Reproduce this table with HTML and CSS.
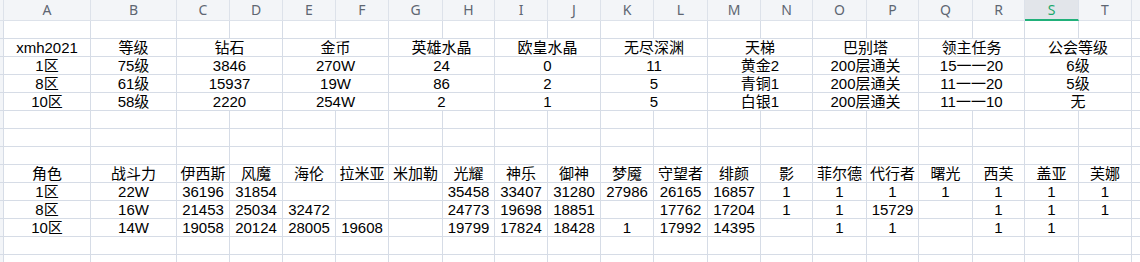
FILE: index.html
```html
<!DOCTYPE html>
<html lang="zh-CN">
<head>
<meta charset="utf-8">
<title>Sheet</title>
<link rel="stylesheet" href="styles.css">
</head>
<body>
<div class="sheet">
  <div class="row hd">
    <div class="c rh"></div><div class="c">A</div><div class="c">B</div><div class="c">C</div><div class="c">D</div><div class="c">E</div><div class="c">F</div><div class="c">G</div><div class="c">H</div><div class="c">I</div><div class="c">J</div><div class="c">K</div><div class="c">L</div><div class="c">M</div><div class="c">N</div><div class="c">O</div><div class="c">P</div><div class="c">Q</div><div class="c">R</div><div class="c sel">S</div><div class="c">T</div><div class="c u"></div>
  </div>
  <div class="row">
    <div class="c rh"></div><div class="c"></div><div class="c"></div><div class="c"></div><div class="c"></div><div class="c"></div><div class="c"></div><div class="c"></div><div class="c"></div><div class="c"></div><div class="c"></div><div class="c"></div><div class="c"></div><div class="c"></div><div class="c"></div><div class="c"></div><div class="c"></div><div class="c"></div><div class="c"></div><div class="c"></div><div class="c"></div><div class="c u"></div>
  </div>
  <div class="row">
    <div class="c rh"></div><div class="c">xmh2021</div><div class="c">等级</div><div class="c m">钻石</div><div class="c m">金币</div><div class="c m">英雄水晶</div><div class="c m">欧皇水晶</div><div class="c m">无尽深渊</div><div class="c m">天梯</div><div class="c m">巴别塔</div><div class="c m">领主任务</div><div class="c m">公会等级</div><div class="c u"></div>
  </div>
  <div class="row">
    <div class="c rh"></div><div class="c">1区</div><div class="c">75级</div><div class="c m">3846</div><div class="c m">270W</div><div class="c m">24</div><div class="c m">0</div><div class="c m">11</div><div class="c m">黄金2</div><div class="c m">200层通关</div><div class="c m">15一一20</div><div class="c m">6级</div><div class="c u"></div>
  </div>
  <div class="row">
    <div class="c rh"></div><div class="c">8区</div><div class="c">61级</div><div class="c m">15937</div><div class="c m">19W</div><div class="c m">86</div><div class="c m">2</div><div class="c m">5</div><div class="c m">青铜1</div><div class="c m">200层通关</div><div class="c m">11一一20</div><div class="c m">5级</div><div class="c u"></div>
  </div>
  <div class="row">
    <div class="c rh"></div><div class="c">10区</div><div class="c">58级</div><div class="c m">2220</div><div class="c m">254W</div><div class="c m">2</div><div class="c m">1</div><div class="c m">5</div><div class="c m">白银1</div><div class="c m">200层通关</div><div class="c m">11一一10</div><div class="c m">无</div><div class="c u"></div>
  </div>
  <div class="row">
    <div class="c rh"></div><div class="c"></div><div class="c"></div><div class="c"></div><div class="c"></div><div class="c"></div><div class="c"></div><div class="c"></div><div class="c"></div><div class="c"></div><div class="c"></div><div class="c"></div><div class="c"></div><div class="c"></div><div class="c"></div><div class="c"></div><div class="c"></div><div class="c"></div><div class="c"></div><div class="c"></div><div class="c"></div><div class="c u"></div>
  </div>
  <div class="row">
    <div class="c rh"></div><div class="c"></div><div class="c"></div><div class="c"></div><div class="c"></div><div class="c"></div><div class="c"></div><div class="c"></div><div class="c"></div><div class="c"></div><div class="c"></div><div class="c"></div><div class="c"></div><div class="c"></div><div class="c"></div><div class="c"></div><div class="c"></div><div class="c"></div><div class="c"></div><div class="c"></div><div class="c"></div><div class="c u"></div>
  </div>
  <div class="row">
    <div class="c rh"></div><div class="c"></div><div class="c"></div><div class="c"></div><div class="c"></div><div class="c"></div><div class="c"></div><div class="c"></div><div class="c"></div><div class="c"></div><div class="c"></div><div class="c"></div><div class="c"></div><div class="c"></div><div class="c"></div><div class="c"></div><div class="c"></div><div class="c"></div><div class="c"></div><div class="c"></div><div class="c"></div><div class="c u"></div>
  </div>
  <div class="row">
    <div class="c rh"></div><div class="c">角色</div><div class="c">战斗力</div><div class="c">伊西斯</div><div class="c">风魔</div><div class="c">海伦</div><div class="c">拉米亚</div><div class="c">米加勒</div><div class="c">光耀</div><div class="c">神乐</div><div class="c">御神</div><div class="c">梦魇</div><div class="c">守望者</div><div class="c">绯颜</div><div class="c">影</div><div class="c">菲尔德</div><div class="c">代行者</div><div class="c">曙光</div><div class="c">西芙</div><div class="c">盖亚</div><div class="c">芙娜</div><div class="c u"></div>
  </div>
  <div class="row">
    <div class="c rh"></div><div class="c">1区</div><div class="c">22W</div><div class="c">36196</div><div class="c">31854</div><div class="c"></div><div class="c"></div><div class="c"></div><div class="c">35458</div><div class="c">33407</div><div class="c">31280</div><div class="c">27986</div><div class="c">26165</div><div class="c">16857</div><div class="c">1</div><div class="c">1</div><div class="c">1</div><div class="c">1</div><div class="c">1</div><div class="c">1</div><div class="c">1</div><div class="c u"></div>
  </div>
  <div class="row">
    <div class="c rh"></div><div class="c">8区</div><div class="c">16W</div><div class="c">21453</div><div class="c">25034</div><div class="c">32472</div><div class="c"></div><div class="c"></div><div class="c">24773</div><div class="c">19698</div><div class="c">18851</div><div class="c"></div><div class="c">17762</div><div class="c">17204</div><div class="c">1</div><div class="c">1</div><div class="c">15729</div><div class="c"></div><div class="c">1</div><div class="c">1</div><div class="c">1</div><div class="c u"></div>
  </div>
  <div class="row">
    <div class="c rh"></div><div class="c">10区</div><div class="c">14W</div><div class="c">19058</div><div class="c">20124</div><div class="c">28005</div><div class="c">19608</div><div class="c"></div><div class="c">19799</div><div class="c">17824</div><div class="c">18428</div><div class="c">1</div><div class="c">17992</div><div class="c">14395</div><div class="c"></div><div class="c">1</div><div class="c">1</div><div class="c"></div><div class="c">1</div><div class="c">1</div><div class="c"></div><div class="c u"></div>
  </div>
  <div class="row">
    <div class="c rh"></div><div class="c"></div><div class="c"></div><div class="c"></div><div class="c"></div><div class="c"></div><div class="c"></div><div class="c"></div><div class="c"></div><div class="c"></div><div class="c"></div><div class="c"></div><div class="c"></div><div class="c"></div><div class="c"></div><div class="c"></div><div class="c"></div><div class="c"></div><div class="c"></div><div class="c"></div><div class="c"></div><div class="c u"></div>
  </div>
  <div class="row">
    <div class="c rh"></div><div class="c"></div><div class="c"></div><div class="c"></div><div class="c"></div><div class="c"></div><div class="c"></div><div class="c"></div><div class="c"></div><div class="c"></div><div class="c"></div><div class="c"></div><div class="c"></div><div class="c"></div><div class="c"></div><div class="c"></div><div class="c"></div><div class="c"></div><div class="c"></div><div class="c"></div><div class="c"></div><div class="c u"></div>
  </div>
</div>
</body>
</html>
```

FILE: styles.css
```css
html, body {
  margin: 0;
  padding: 0;
  background: #fff;
  overflow: hidden;
}

.sheet {
  display: grid;
  grid-template-columns: 4px 87px 86px 53px 53px 53px 53px 54px 52px 53px 53px 53px 54px 53px 52px 54px 52px 54px 52px 54px 53px 20px;
  grid-template-rows: 21px;
  grid-auto-rows: 18px;
  width: max-content;
  font-family: "Liberation Sans", "Noto Sans CJK SC", sans-serif;
  font-size: 15px;
  color: #000;
}

.row {
  display: contents;
}

.c {
  box-sizing: border-box;
  padding-top: 1px;
  border-right: 1px solid #d6dce6;
  border-bottom: 1px solid #d6dce6;
  text-align: center;
  line-height: 16px;
  white-space: nowrap;
}

.m {
  grid-column: span 2;
}

.rh {
  background: #f3f5f8;
}

.u {
  border-right: none;
}

.hd .c {
  padding-top: 0;
  background: #f3f5f8;
  border-color: #dde2ea;
  color: #5e6672;
  font-family: "Noto Sans", sans-serif;
  font-size: 14px;
  line-height: 20px;
}

.hd .sel {
  background: #e2e5ea;
  border-bottom: 2px solid #21b07a;
  color: #1aa86c;
}
```
